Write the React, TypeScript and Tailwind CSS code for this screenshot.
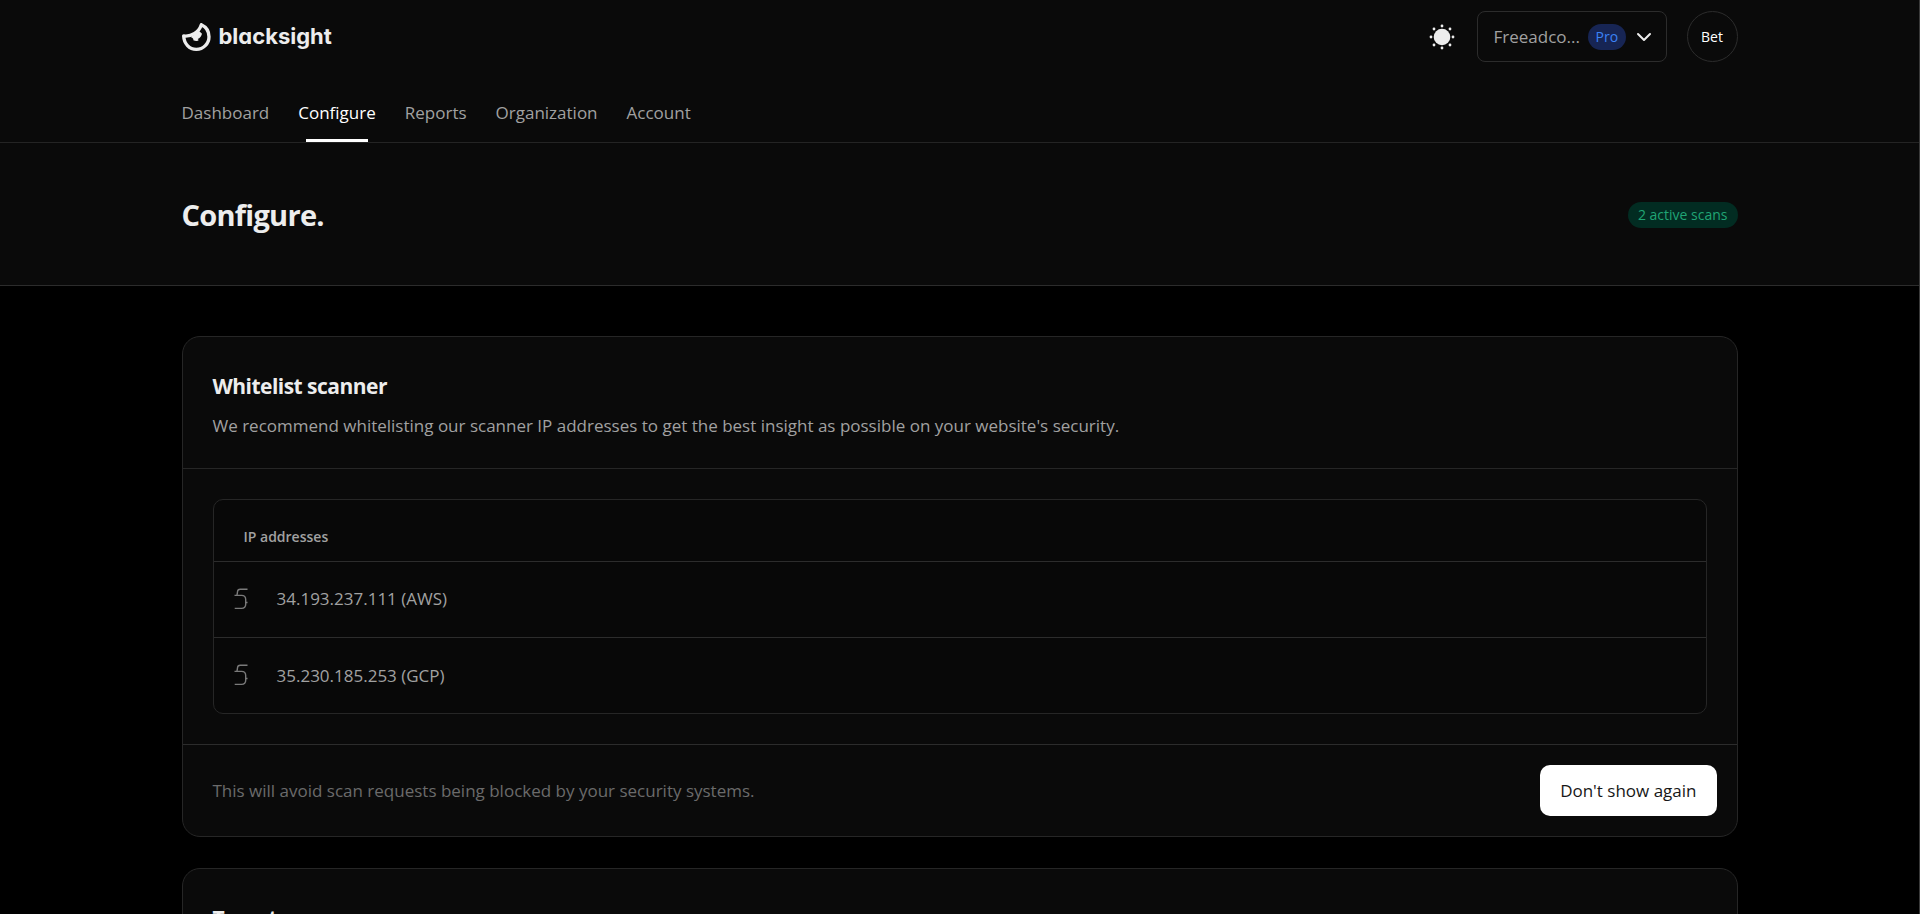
import { ChevronDown } from 'lucide-react';

const navItems = [
  { label: 'Dashboard', active: false },
  { label: 'Configure', active: true },
  { label: 'Reports', active: false },
  { label: 'Organization', active: false },
  { label: 'Account', active: false },
];

const addresses = ['34.193.237.111 (AWS)', '35.230.185.253 (GCP)'];

function LogoMark() {
  return (
    <svg viewBox="0 0 87 84" className="h-7 w-[29px]" fill="none" aria-hidden="true">
      <path
        d="M5 39C29 42 51 27 58 5C73 12 81 26 81 41A38 38 0 0 1 43 79C22 79 6 62 5 39Z"
        stroke="currentColor"
        strokeWidth="10"
        strokeLinejoin="round"
      />
      <path d="M26 42C33 45 35 47 34 52C42 56 48 54 50 51L47 48C54 45 58 40 60 32L52 25Z" fill="currentColor" />
    </svg>
  );
}

function SunIcon() {
  const dots = [
    [13, 2],
    [21, 5],
    [24, 13],
    [21, 21],
    [13, 24],
    [5, 21],
    [2, 13],
    [5, 5],
  ];
  return (
    <svg viewBox="0 0 26 26" className="h-[26px] w-[26px]" fill="currentColor" aria-hidden="true">
      <circle cx="13" cy="13" r="8.3" />
      {dots.map(([x, y]) => (
        <circle key={`${x}-${y}`} cx={x} cy={y} r="1.4" />
      ))}
    </svg>
  );
}

function RouteIcon() {
  return (
    <svg viewBox="0 0 14 22" className="h-[22px] w-3.5" fill="none" stroke="currentColor" strokeWidth="1.4" aria-hidden="true">
      <path d="M13.5 1.2H6.2Q3.7 1.2 3.5 3.8L3 7.2" />
      <path d="M.5 7.4H7.5Q11.7 7.4 11.7 11.5V16.3Q11.7 20.4 7.5 20.4H.7" />
      <path d="M11 14.5H13.5" />
    </svg>
  );
}

export default function App() {
  return (
    <div className="h-screen overflow-hidden border-r border-[#3a3a3a] bg-black font-['Open_Sans','Noto_Sans',sans-serif] text-[17px] text-[#a1a1a1]">
      <header className="border-b border-[#242424] bg-[#0a0a0a]">
        <div className="mx-auto w-full max-w-[1620px] px-8">
          <div className="flex h-[73px] items-center justify-between">
            <a href="#" className="flex items-center gap-2 text-[#ededed]">
              <LogoMark />
              <span className="font-['Inter',sans-serif] text-[22px] font-bold [font-feature-settings:'cv11']">
                blacksight
              </span>
            </a>
            <div className="flex items-center">
              <button type="button" aria-label="Theme" className="mr-[22px] text-[#ededed]">
                <SunIcon />
              </button>
              <button
                type="button"
                className="mr-5 flex h-[51px] w-[190px] items-center rounded-lg border border-[#2c2c2c] pl-4"
              >
                <span className="w-[84px] text-left">Freeadco...</span>
                <span className="ml-2.5 rounded-full bg-[#172554] px-2 text-[14px] leading-[26px] text-[#3b82f6]">
                  Pro
                </span>
                <ChevronDown className="ml-1.5 h-6 w-6 text-[#ededed]" strokeWidth={2} />
              </button>
              <button
                type="button"
                className="h-[51px] w-[51px] rounded-full border border-[#2c2c2c] text-[14px] font-medium text-white"
              >
                Bet
              </button>
            </div>
          </div>
          <nav className="flex h-[69px] gap-[29px]">
            {navItems.map((item) => (
              <a
                key={item.label}
                href="#"
                className={`flex flex-col items-center justify-between pt-7 leading-6 ${
                  item.active ? 'text-white' : ''
                }`}
              >
                {item.label}
                {item.active && <span className="h-[3px] w-[62px] bg-white" />}
              </a>
            ))}
          </nav>
        </div>
      </header>

      <div className="border-b border-[#2c2c2c] bg-[#0a0a0a]">
        <div className="mx-auto flex h-[142px] w-full max-w-[1620px] items-center justify-between px-8 pt-0.5">
          <h1 className="text-[29px] font-bold tracking-tight text-[#ededed]">Configure.</h1>
          <span className="rounded-full bg-[#022c22] px-2.5 text-[14px] leading-[26px] text-[#20a575]">
            2 active scans
          </span>
        </div>
      </div>

      <main className="mx-auto w-full max-w-[1620px] space-y-[31px] px-8 pt-[50px]">
        <section className="rounded-[18px] border border-[#262626] bg-[#0a0a0a]">
          <div className="border-b border-[#262626] px-[30px] pt-[33px] pb-7">
            <h2 className="text-[21px] leading-8 font-bold tracking-tight text-[#ededed]">Whitelist scanner</h2>
            <p className="mt-2.5 leading-7">
              We recommend whitelisting our scanner IP addresses to get the best insight as possible on your
              website's security.
            </p>
          </div>
          <div className="px-[30px] py-[30px]">
            <div className="overflow-hidden rounded-[10px] border border-[#262626] bg-[#080808]">
              <table className="w-full text-left">
                <thead>
                  <tr className="h-[61px] border-b border-[#2c2c2c]">
                    <th colSpan={2} className="px-[30px] pt-3 text-[14px] font-semibold">
                      IP addresses
                    </th>
                  </tr>
                </thead>
                <tbody>
                  {addresses.map((address) => (
                    <tr key={address} className="h-[76px] border-b border-[#2c2c2c] last:border-0">
                      <td className="w-[63px] pl-5 text-[#7a7a7a]">
                        <RouteIcon />
                      </td>
                      <td>{address}</td>
                    </tr>
                  ))}
                </tbody>
              </table>
            </div>
          </div>
          <div className="flex items-center justify-between border-t border-[#2c2c2c] py-5 pr-5 pl-[30px]">
            <p className="text-[#6b6b6b]">This will avoid scan requests being blocked by your security systems.</p>
            <button type="button" className="h-[51px] rounded-[10px] bg-white px-5 text-[#171717]">
              Don't show again
            </button>
          </div>
        </section>

        <section className="rounded-[18px] border border-[#262626] bg-[#0a0a0a]">
          <div className="px-[30px] pt-[33px] pb-7">
            <h2 className="text-[21px] leading-8 font-bold tracking-tight text-[#ededed]">Targets</h2>
          </div>
        </section>
      </main>
    </div>
  );
}
